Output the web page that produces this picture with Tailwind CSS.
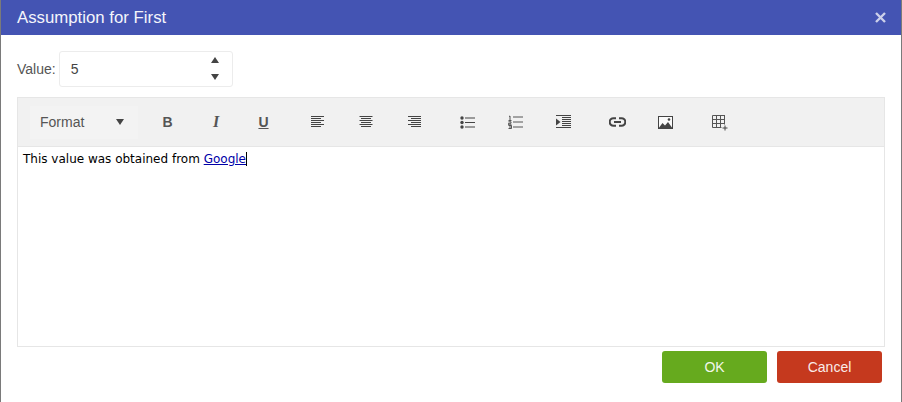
<!DOCTYPE html>
<html lang="en">
<head>
<meta charset="UTF-8">
<title>Assumption for First</title>
<script src="https://cdn.jsdelivr.net/npm/@tailwindcss/browser@4"></script>
</head>
<body class="bg-white font-['Liberation_Sans',sans-serif] overflow-hidden">
<div class="w-[902px] h-[402px] border-x border-[#7a7a7a] flex flex-col bg-white">

  <!-- title bar -->
  <header class="h-[35px] bg-[#4454b3] flex items-center justify-between pl-4 pr-[15px] shrink-0">
    <h1 class="text-[16.800px] text-[#f4f5fb]">Assumption for First</h1>
    <svg class="w-[11px] h-[11px] text-[#ccd0ea]" viewBox="0 0 11 11" fill="none" stroke="currentColor" stroke-width="2.4"><path d="M1 1l9 9M10 1l-9 9"/></svg>
  </header>

  <div class="flex flex-col flex-1 px-4">
    <!-- value -->
    <div class="flex items-center mt-4 h-9 gap-[3px]">
      <label class="text-[14px] text-[#555]">Value:</label>
      <div class="w-[174px] h-9 border border-[#ececec] rounded-[3px] flex items-center justify-between pl-[11px] pr-[13px]">
        <span class="text-[14px] text-[#444]">5</span>
        <div class="flex flex-col gap-[11px] -mt-[1px]">
          <svg class="w-[8px] h-[6px]" viewBox="0 0 8 6" fill="#444"><path d="M4 0l4 6H0z"/></svg>
          <svg class="w-[8px] h-[6px]" viewBox="0 0 8 6" fill="#444"><path d="M0 0h8L4 6z"/></svg>
        </div>
      </div>
    </div>

    <!-- editor -->
    <div class="mt-[10px] h-[250px] border border-[#e6e6e6] flex flex-col">
      <div class="h-[49px] bg-[#f1f1f1] border-b border-[#e6e6e6] flex items-center pl-3 text-[#444] shrink-0">
        <div class="w-[108px] h-[33px] bg-[#f3f3f3] flex items-center justify-between pl-[10px] pr-[14px]">
          <span class="text-[14px] text-[#555]">Format</span>
          <svg class="w-[8px] h-[6px]" viewBox="0 0 8 6" fill="#444"><path d="M0 0h8L4 6z"/></svg>
        </div>
        <div class="w-[48px] ml-[6px] pr-[1px] flex justify-center font-bold text-[14px] text-[#555]">B</div>
        <div class="w-[48px] flex justify-center font-['Liberation_Serif',serif] italic font-bold text-[16px] text-[#555]">I</div>
        <div class="w-[48px] pr-[1px] flex justify-center font-bold text-[14px] text-[#555] underline">U</div>

        <div class="w-[48px] ml-[6px] flex justify-center">
          <svg class="w-[14px] h-[12px]" viewBox="0 0 14 12" stroke="#444" stroke-width="1"><path d="M0 .5h13M0 2.500h10M0 4.500h13M0 6.500h10M0 8.500h13M0 10.500h10"/></svg>
        </div>
        <div class="w-[48px] flex justify-center">
          <svg class="w-[14px] h-[12px]" viewBox="0 0 14 12" stroke="#444" stroke-width="1"><path d="M.5 .5h13M2 2.500h10M.5 4.500h13M2 6.500h10M.5 8.500h13M2 10.500h10"/></svg>
        </div>
        <div class="w-[48px] flex justify-center">
          <svg class="w-[14px] h-[12px]" viewBox="0 0 14 12" stroke="#444" stroke-width="1"><path d="M1 .5h13M4 2.500h10M1 4.500h13M4 6.500h10M1 8.500h13M4 10.500h10"/></svg>
        </div>

        <div class="w-[48px] ml-[6px] pr-[1px] flex justify-center">
          <svg class="w-[15px] h-[13px]" viewBox="0 0 15 13" fill="#444"><circle cx="2" cy="2" r="1.700"/><circle cx="2" cy="6.500" r="1.700"/><circle cx="2" cy="11" r="1.700"/><path d="M5 1.500h10v1H5zM5 6h10v1H5zM5 10.500h10v1H5z"/></svg>
        </div>
        <div class="w-[48px] pr-[1px] flex justify-center">
          <svg class="w-[15px] h-[14px]" viewBox="0 0 15 14" fill="none" stroke="#444"><path d="M1 1.500l1-.5v4M.5 5.500h3M.5 6.800h2.500v1.500h-2.500v1.500h3M.5 10.500h3v3h-3M1 12h2M5 2h10M5 7h10M5 12h10" stroke-width="0.900"/></svg>
        </div>
        <div class="w-[48px] pr-[1px] flex justify-center">
          <svg class="w-[15px] h-[14px]" viewBox="0 0 15 14" stroke="#444"><path d="M0 .5h15M6 2.500h9M6 4.500h9M6 6.500h9M6 8.500h9M6 10.500h9M0 12.500h15" stroke-width="1"/><path d="M0 3.500L4.500 7 0 10.500z" fill="#444" stroke="none"/></svg>
        </div>

        <div class="w-[48px] ml-[6px] pr-[1px] flex justify-center">
          <svg class="w-[17px] h-[10px]" viewBox="0 0 17 10" fill="none" stroke="#444" stroke-width="2"><path d="M7 1.200H4.500a3.800 3.800 0 0 0 0 7.600H7M10 1.200h2.500a3.800 3.800 0 0 1 0 7.600H10M5 5h7"/></svg>
        </div>
        <div class="w-[48px] pr-[1px] flex justify-center">
          <svg class="w-[15px] h-[13px]" viewBox="0 0 15 13"><rect x=".5" y=".5" width="14" height="12" fill="#fafafa" stroke="#444"/><path d="M0 13l4.500-6 2.500 2.500L10 6l5 7z" fill="#444"/><circle cx="11" cy="3.500" r="1.300" fill="#444"/></svg>
        </div>
        <div class="w-[48px] ml-[6px] pt-[2px] flex justify-center">
          <svg class="w-[16px] h-[16px]" viewBox="0 0 16 16" fill="none" stroke="#555"><path d="M.5 .5h12.500M.5 4.500h12.500M.5 8.500h12.500M.5 12.500h9M.5 .5v12M4.500 .5v12M8.500 .5v12M12.500 .5v9"/><path d="M13 10.500v5M10.500 13h5" stroke="#444"/></svg>
        </div>
      </div>
      <div class="flex-1 px-[5px] pt-[4px] font-['DejaVu_Sans',sans-serif] text-[12px] leading-[16px] text-black">This value was obtained from <a class="text-[#0000a8] underline border-r border-black">Google</a></div>
    </div>

    <!-- actions -->
    <div class="flex justify-end gap-[10px] mt-1 pr-[3px]">
      <button class="w-[105px] h-8 bg-[#66aa1e] rounded-[3px] text-[14px] text-[#f2f7ea]">OK</button>
      <button class="w-[105px] h-8 bg-[#c5391e] rounded-[3px] text-[14px] text-[#f9ebe8]">Cancel</button>
    </div>
  </div>
</div>
</body>
</html>
